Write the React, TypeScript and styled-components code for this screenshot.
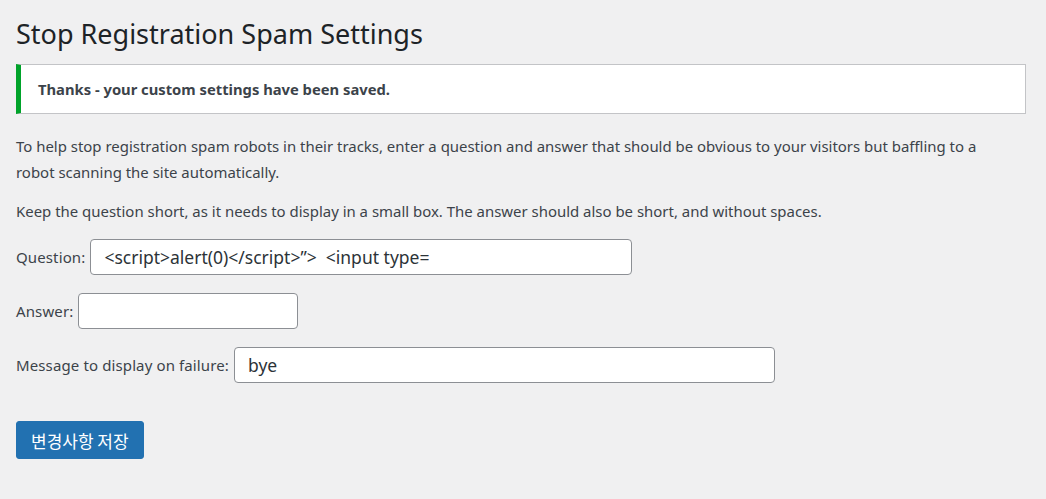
import React from "react";
import styled, { createGlobalStyle } from "styled-components";

const Global = createGlobalStyle`
  html, body { margin: 0; padding: 0; background: #f0f0f1; }
  body { font-family: "Noto Sans", "Noto Sans CJK KR", sans-serif; color: #3c434a; }
`;

const Wrap = styled.div`
  padding: 14px 20px 20px 16px;
`;

const Title = styled.h1`
  margin: 0 0 10px;
  font-size: 27px;
  font-weight: 400;
  line-height: 40px;
  color: #1d2327;
`;

const Notice = styled.div`
  background: #fff;
  border: 1px solid #c3c4c7;
  border-left: 5px solid #00a32a;
  height: 48px;
  display: flex;
  align-items: center;
  padding: 0 17px;
  font-size: 14.75px;
  font-weight: 700;
  color: #3c434a;
  margin-bottom: 19px;
`;

const Para = styled.p`
  margin: 0 0 13px;
  max-width: 1000px;
  font-size: 14.94px;
  line-height: 26px;
  &:last-of-type { margin-bottom: 15px; }
`;

const Row = styled.div`
  display: flex;
  align-items: center;
  gap: 5px;
  margin-bottom: 18px;
  font-size: 15px;
`;

const Label = styled.label`
  letter-spacing: 0.12px;
`;

const Field = styled.div<{ $w: number }>`
  width: ${(p) => p.$w}px;
  height: 36px;
  box-sizing: border-box;
  background: #fff;
  border: 1px solid #8c8f94;
  border-radius: 4px;
  padding: 0 13px;
  display: flex;
  align-items: center;
  font-size: 17.5px;
  color: #2c3338;
  white-space: pre;
`;

const Button = styled.button`
  margin-top: 20px;
  background: #2271b1;
  border: 1px solid #2271b1;
  border-radius: 3px;
  color: #fff;
  font-family: "Noto Sans CJK KR", sans-serif;
  font-size: 17px;
  height: 38px;
  padding: 0 14px;
`;

export default function App() {
  return (
    <>
      <Global />
      <Wrap>
        <Title>Stop Registration Spam Settings</Title>
        <Notice>Thanks - your custom settings have been saved.</Notice>
        <Para>
          To help stop registration spam robots in their tracks, enter a question and answer that should be obvious to your visitors but baffling to a robot scanning the site automatically.
        </Para>
        <Para>
          Keep the question short, as it needs to display in a small box. The answer should also be short, and without spaces.
        </Para>
        <Row>
          <Label>Question:</Label>
          <Field $w={542}>{"<script>alert(0)</script>\u201D>  <input type="}</Field>
        </Row>
        <Row>
          <Label>Answer:</Label>
          <Field $w={220}></Field>
        </Row>
        <Row>
          <Label>Message to display on failure:</Label>
          <Field $w={541}>bye</Field>
        </Row>
        <Button>변경사항 저장</Button>
      </Wrap>
    </>
  );
}
